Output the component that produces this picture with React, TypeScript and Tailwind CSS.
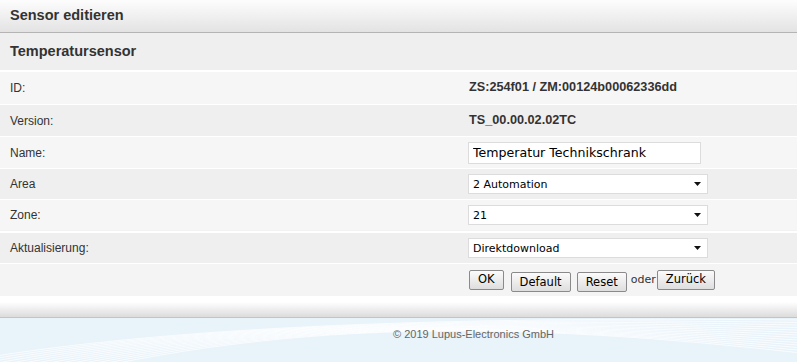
import { ChangeEvent, useState } from 'react';

const LABEL = "font-['Liberation_Sans',Arial,sans-serif] text-[12px] text-[#333]";
const CTRL = "font-['DejaVu_Sans',Tahoma,sans-serif] text-black";

function Row({
  label,
  children,
  tone,
  height,
  border = 'border-t',
}: {
  label?: string;
  children?: React.ReactNode;
  tone: 'light' | 'dark' | 'plain';
  height: string;
  border?: string;
}) {
  const bg = tone === 'light' ? 'bg-[#f6f6f6]' : tone === 'dark' ? 'bg-[#efefef]' : 'bg-[#f4f4f4]';
  return (
    <div className={`flex items-center ${height} ${bg} ${border} border-white`}>
      <div className={`w-[468px] pl-[10px] ${LABEL}`}>{label}</div>
      <div className="flex flex-1 items-center">{children}</div>
    </div>
  );
}

function Dropdown({ value, options }: { value: string; options: string[] }) {
  const [v, setV] = useState(value);
  return (
    <div className="relative h-[20px] w-[240px]">
      <select
        value={v}
        onChange={(e: ChangeEvent<HTMLSelectElement>) => setV(e.target.value)}
        className={`block h-full w-full appearance-none border border-[#dcdcdc] bg-white pl-[4px] text-[11px] leading-none outline-none ${CTRL}`}
      >
        {options.map((o) => (
          <option key={o}>{o}</option>
        ))}
      </select>
      <svg className="pointer-events-none absolute right-[7px] top-[8px]" width="7" height="4" viewBox="0 0 7 4">
        <path d="M0 0h7L3.5 4z" fill="#111" />
      </svg>
    </div>
  );
}

function Btn({ children }: { children: React.ReactNode }) {
  return (
    <button
      className={`h-[20px] rounded-[2px] border border-[#8a8a8a] bg-gradient-to-b from-[#fbfbfb] to-[#dedede] px-[8px] text-[11.5px] leading-none ${CTRL}`}
    >
      {children}
    </button>
  );
}

export default function App() {
  const [name, setName] = useState('Temperatur Technikschrank');

  return (
    <div className="flex h-[362px] w-[797px] flex-col overflow-hidden bg-white">
      {/* Panel header */}
      <div className="flex h-[33px] items-center border-b border-[#b4b4b4] bg-gradient-to-b from-[#fdfdfd] to-[#e3e3e3] pl-[10px]">
        <h1 className="font-['Liberation_Sans',Arial,sans-serif] text-[14.5px] font-bold text-[#333]">Sensor editieren</h1>
      </div>

      <div className="flex h-[37px] items-center bg-[#efefef] pl-[10px]">
        <h2 className="font-['Liberation_Sans',Arial,sans-serif] text-[14.5px] font-bold text-[#333]">Temperatursensor</h2>
      </div>

      <Row label="ID:" tone="light" height="h-[34px]" border="border-t-2">
        <span className="pl-[1px] font-['Liberation_Sans',Arial,sans-serif] text-[12.7px] font-bold text-[#333]">
          ZS:254f01 / ZM:00124b00062336dd
        </span>
      </Row>
      <Row label="Version:" tone="dark" height="h-[32px]">
        <span className="pl-[1px] font-['Liberation_Sans',Arial,sans-serif] text-[12.7px] font-bold text-[#333]">
          TS_00.00.02.02TC
        </span>
      </Row>
      <Row label="Name:" tone="light" height="h-[32px]">
        <input
          value={name}
          onChange={(e) => setName(e.target.value)}
          className={`h-[22px] w-[233px] border border-[#dcdcdc] bg-white pl-[4px] text-[12.6px] outline-none ${CTRL}`}
        />
      </Row>
      <Row label="Area" tone="dark" height="h-[31px]">
        <Dropdown value="2 Automation" options={['1 Wohnen', '2 Automation', '3 Technik']} />
      </Row>
      <Row label="Zone:" tone="light" height="h-[31px]">
        <Dropdown value="21" options={['20', '21', '22']} />
      </Row>
      <div className="h-px bg-[#f2f2f2]" />
      <Row label="Aktualisierung:" tone="dark" height="h-[32px]" border="border-t-[2px]">
        <Dropdown value="Direktdownload" options={['Direktdownload', 'Standard']} />
      </Row>
      <Row tone="plain" height="h-[33px]">
        <div className="flex items-center pl-[1px]">
          <Btn>OK</Btn>
          <span className="ml-[7px]">
            <Btn>Default</Btn>
          </span>
          <span className="ml-[6px]">
            <Btn>Reset</Btn>
          </span>
          <span className="ml-[4px] mr-[1px] font-['DejaVu_Sans',Tahoma,sans-serif] text-[11px] text-[#333]">oder</span>
          <Btn>Zurück</Btn>
        </div>
      </Row>

      {/* Panel bottom */}
      <div className="h-[6px] bg-white" />
      <div className="h-[16px] border-b border-[#c4c4c4] bg-gradient-to-b from-[#ffffff] to-[#dcdcdc]" />

      {/* Footer */}
      <footer className="relative flex flex-1 justify-center bg-[#e9f3fa] pl-[150px] pt-[8px]">
        <svg className="absolute inset-0" width="797" height="44" viewBox="0 0 797 44" preserveAspectRatio="none">
          {Array.from({ length: 14 }).map((_, i) => (
            <path
              key={i}
              d={`M${-40 + i * 4} ${44 + i * 2} C ${150 + i * 10} ${10 - i}, ${420 + i * 8} ${-2 + i * 0.5}, ${797} ${2 + i * 2.5}`}
              stroke="#ffffff"
              strokeOpacity="0.75"
              strokeWidth="1"
              fill="none"
            />
          ))}
        </svg>
        <span className="relative font-['Liberation_Sans',Arial,sans-serif] text-[11px] text-[#666]">
          © 2019 Lupus-Electronics GmbH
        </span>
      </footer>
    </div>
  );
}
